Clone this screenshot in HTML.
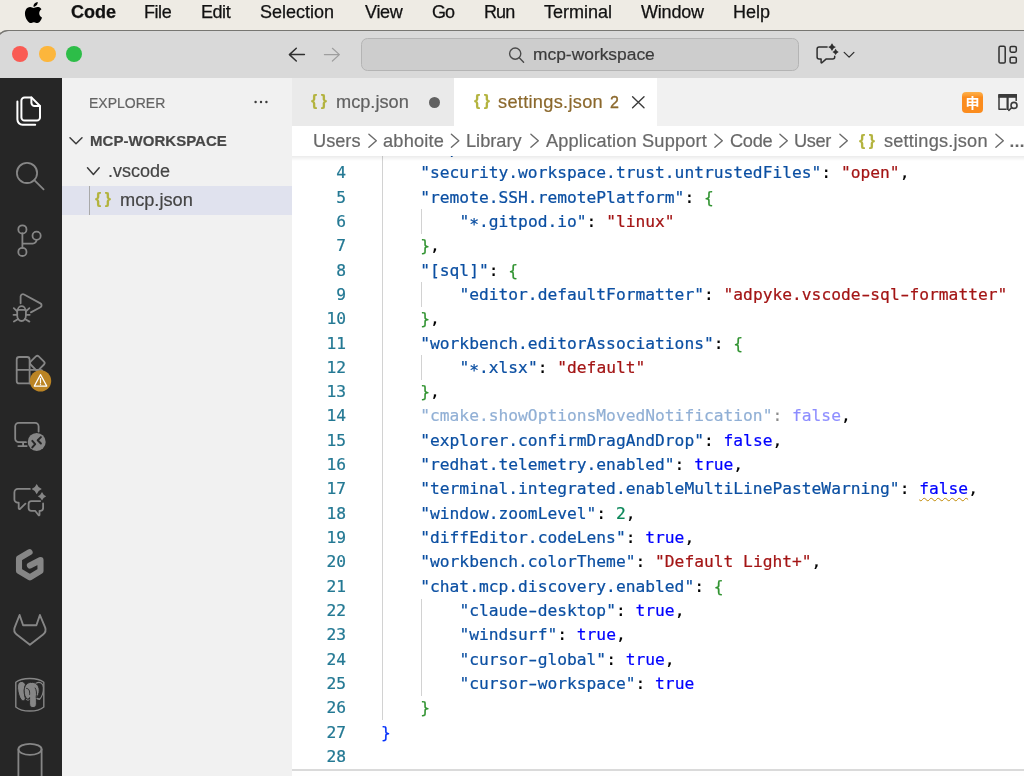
<!DOCTYPE html>
<html lang="en">
<head>
<meta charset="utf-8">
<title>settings.json — mcp-workspace</title>
<style>
*{box-sizing:border-box;margin:0;padding:0}
html,body{width:1024px;height:776px;overflow:hidden;background:#eeebe4}
body{position:relative;font-family:"Liberation Sans","Noto Sans CJK JP",sans-serif;color:#3b3b3b;-webkit-font-smoothing:antialiased}
.abs{position:absolute}
/* ---------- macOS menu bar ---------- */
#menubar{position:absolute;left:0;top:0;width:1024px;height:30px;background:#eeebe4}
#menubar span{position:absolute;top:-.6px;height:30px;line-height:27px;font-size:18px;color:#111;white-space:nowrap;-webkit-text-stroke:.25px}
#menubar span.b{font-weight:bold}
/* ---------- window ---------- */
#win{position:absolute;left:-4.5px;top:30px;width:1040px;height:760px;background:#d9d9d9;border-top-left-radius:12px;overflow:hidden;box-shadow:inset 0 1px 0 #777672, inset 1px 1px 0 #777672}
#titlebar{position:absolute;left:4.5px;top:0;width:1024px;height:48px}
.tl{position:absolute;top:15.9px;width:16.3px;height:16.3px;border-radius:50%}
#search{position:absolute;left:360.6px;top:8.4px;width:438.4px;height:32.6px;border-radius:6.5px;background:#cdcdcd;border:1px solid #b4b4b4}
#search span{position:absolute;left:171px;top:0;line-height:30px;font-size:17.4px;color:#3a3a3a;white-space:nowrap;-webkit-text-stroke:.2px}
/* ---------- activity bar ---------- */
#activity{position:absolute;left:0;top:78px;width:62px;height:698px;background:#262626}
/* ---------- sidebar ---------- */
#sidebar{position:absolute;left:62px;top:78px;width:230px;height:698px;background:#f1f1f1}
#sidebar .t{position:absolute;white-space:nowrap;-webkit-text-stroke:.2px}
/* ---------- editor area ---------- */
#tabs{position:absolute;left:292px;top:78px;width:732px;height:48px;background:#f1f1f1}
.tab{position:absolute;top:0;height:48px}
.tab .lbl{position:absolute;top:0;line-height:48px;font-size:18.2px;white-space:nowrap;-webkit-text-stroke:.2px}
.br{font-family:"Liberation Sans",sans-serif;color:#b3b33e;font-weight:bold;letter-spacing:3.55px}
#crumbs{position:absolute;left:292px;top:126px;width:732px;height:30px;background:#fff}
#crumbs span{position:absolute;top:0;line-height:30px;font-size:18.2px;color:#686868;white-space:nowrap;-webkit-text-stroke:.2px}
#editor{position:absolute;left:292px;top:156px;width:732px;height:613px;background:#fff;overflow:hidden}
#code{position:absolute;left:0;top:-19.2px;width:732px}
.ln{position:relative;height:24.32px;line-height:24.32px;font-family:"DejaVu Sans Mono","Liberation Mono",monospace;font-size:16.25px;white-space:pre;color:#000;-webkit-text-stroke:.22px}
.ln i{position:absolute;left:0;top:0;width:54px;text-align:right;font-style:normal;color:#237893}
.ln b{position:absolute;left:89.1px;top:0;font-weight:normal}
.k{color:#0b4fa2}.s{color:#a31515}.w{color:#0000ff}.n{color:#098658}.g1{color:#0431fa}.g2{color:#319331}
.hy{display:inline-block;transform:scaleX(1.55)}
.as{position:relative;top:3px}
.fade{opacity:.45}
.sq{text-decoration:underline wavy #bf8803;text-decoration-thickness:1.2px;text-underline-offset:3px;text-decoration-skip-ink:none}
.guide{position:absolute;width:1.3px;background:#d2d2d2}
#panel{position:absolute;left:292px;top:769px;width:732px;height:7px;background:#fefefe;border-top:2px solid #dadada}
#menubar span,#search span,#sidebar .t,.tab .lbl,#crumbs span,#code,.emoji{will-change:transform}
</style>
</head>
<body>

<div id="menubar">
  <svg class="abs" style="left:23.3px;top:2.1px" width="21" height="21" viewBox="0 0 24 24"><path fill="#000" d="M12.152 6.896c-.948 0-2.415-1.078-3.96-1.04-2.04.027-3.91 1.183-4.961 3.014-2.117 3.675-.546 9.103 1.519 12.09 1.013 1.454 2.208 3.09 3.792 3.039 1.52-.065 2.09-.987 3.935-.987 1.831 0 2.35.987 3.96.948 1.637-.026 2.676-1.48 3.676-2.948 1.156-1.688 1.636-3.325 1.662-3.415-.039-.013-3.182-1.221-3.22-4.857-.026-3.04 2.48-4.494 2.597-4.559-1.429-2.09-3.623-2.324-4.39-2.376-2-.156-3.675 1.09-4.61 1.09zM15.53 3.83c.843-1.012 1.4-2.427 1.245-3.83-1.207.052-2.662.805-3.532 1.818-.78.896-1.454 2.338-1.273 3.714 1.338.104 2.715-.688 3.559-1.701"/></svg>
  <span class="b" style="left:71px">Code</span>
  <span style="left:144px;letter-spacing:-.45px">File</span>
  <span style="left:201px;letter-spacing:-.45px">Edit</span>
  <span style="left:260px">Selection</span>
  <span style="left:365px;letter-spacing:-.3px">View</span>
  <span style="left:432px;letter-spacing:-1px">Go</span>
  <span style="left:483.5px;letter-spacing:-.9px">Run</span>
  <span style="left:544px">Terminal</span>
  <span style="left:641px;letter-spacing:-.2px">Window</span>
  <span style="left:733px">Help</span>
</div>

<div id="win">
  <div id="titlebar">
    <div class="tl" style="left:12.15px;background:#fa5b54"></div>
    <div class="tl" style="left:39.25px;background:#fcb63c"></div>
    <div class="tl" style="left:66.15px;background:#2dbd48"></div>
    <div id="search"><span>mcp-workspace</span></div>
  </div>
</div>

<svg id="tbicons" class="abs" style="left:0;top:30px" width="1024" height="48" viewBox="0 30 1024 48" fill="none" stroke="#2f2f2f" stroke-width="1.5" stroke-linecap="round" stroke-linejoin="round">
  <path d="M304.4 54.6H289.4M296.3 48.3L289.4 54.6L296.3 61"/>
  <path d="M324.4 54.6H339.4M332.4 48.3L339.4 54.6L332.4 61" stroke="#9e9e9e" stroke-width="1.2"/>
  <!-- search glyph -->
  <circle cx="515.2" cy="53.6" r="5.6" stroke="#4a4a4a" stroke-width="1.4"/>
  <path d="M519.3 57.8L523.6 62.2" stroke="#4a4a4a" stroke-width="1.4"/>
  <!-- chat sparkle -->
  <path d="M827.1 47.1H819.1a2 2 0 0 0-2 2V57.1a2 2 0 0 0 2 2H821.1V62.4a.5.5 0 0 0 .85.35L826 59.1H832.7a2 2 0 0 0 2-2V56.2"/>
  <path d="M832 43.20Q833.09 46.01 835.90 47.1Q833.09 48.19 832 51.00Q830.91 48.19 828.10 47.1Q830.91 46.01 832 43.20Z" fill="#2f2f2f" stroke="none"/>
  <path d="M835.6 48.80Q836.47 51.03 838.70 51.9Q836.47 52.77 835.6 55.00Q834.73 52.77 832.50 51.9Q834.73 51.03 835.6 48.80Z" fill="#2f2f2f" stroke="none"/>
  <path d="M844.2 52.4L849.1 57.1L853.9 52.4" stroke-width="1.3"/>
  <!-- layout -->
  <rect x="999" y="46.3" width="6.2" height="16.8" rx="1.4"/>
  <rect x="1010.1" y="46.4" width="6.2" height="5.8" rx="1.4"/>
  <rect x="1010.1" y="57.2" width="6.2" height="5.9" rx="1.4"/>
</svg>

<div id="activity">
<svg class="abs" style="left:0;top:0" width="62" height="698" viewBox="0 78 62 698" fill="none" stroke="#868686" stroke-width="1.8" stroke-linecap="round" stroke-linejoin="round">
  <!-- explorer (active) -->
  <g stroke="#ffffff" stroke-width="2">
    <path d="M24.6 97.4H31.4L40 106V117.4a3.2 3.2 0 0 1-3.2 3.2H24.6a3.2 3.2 0 0 1-3.2-3.2V100.6a3.2 3.2 0 0 1 3.2-3.2Z"/>
    <path d="M31.4 97.6V102.8a3.2 3.2 0 0 0 3.2 3.2H39.8"/>
    <path d="M17.4 101.6V119.6a5.2 5.2 0 0 0 5.2 5.2H35.2"/>
  </g>
  <!-- search -->
  <circle cx="27" cy="172.9" r="10.1"/>
  <path d="M34.3 180.2L43.6 189.3"/>
  <!-- source control -->
  <circle cx="22.4" cy="229.4" r="4.1"/>
  <circle cx="22.4" cy="251.9" r="4.1"/>
  <circle cx="36.6" cy="235.7" r="4.1"/>
  <path d="M22.4 233.5V247.8M36.6 239.8a3.8 3.8 0 0 1-3.8 3.8H22.4"/>
  <!-- run and debug -->
  <path d="M20.6 303.3V296.6a2.4 2.4 0 0 1 3.5-2.1L40.4 303.4a2.2 2.2 0 0 1 0 3.9L30.9 312.4"/>
  <path d="M17.2 309.9H25.9V315.6a4.35 5.4 0 0 1-8.7 0Z"/>
  <path d="M17.9 309.9a3.7 3.7 0 0 1 7.4 0"/>
  <path d="M17.2 311.4L13.8 308.2M17.2 314.8H13.5M18.2 319L13.9 321.6M25.9 311.4L29.4 308.2M25.9 314.8H29.7M24.9 319L29.4 321.6"/>
  <!-- extensions -->
  <path d="M19.2 357H27.1a2.5 2.5 0 0 1 2.5 2.5V383.4H19.2a2.5 2.5 0 0 1-2.5-2.5V359.5a2.5 2.5 0 0 1 2.5-2.5Z"/>
  <path d="M16.7 369.9H40.5a2 2 0 0 1 2 2V381a2.4 2.4 0 0 1-2.4 2.4H29.6"/>
  <path d="M35.9 356.4a2 2 0 0 1 2.8 0l5.3 5.3a2 2 0 0 1 0 2.8l-5.3 5.3a2 2 0 0 1-2.8 0l-5.3-5.3a2 2 0 0 1 0-2.8Z"/>
  <circle cx="40.5" cy="380.9" r="10.7" fill="#bb8424" stroke="none"/>
  <path d="M40.5 374.6L34.3 386.1H46.8Z" stroke="#ffffff" stroke-width="1.2"/>
  <path d="M40.5 378.4V383" stroke="#ffffff" stroke-width="1.2"/>
  <circle cx="40.5" cy="384.6" r=".7" fill="#ffffff" stroke="none"/>
  <!-- remote explorer -->
  <path d="M38.6 431.6V426.4a3.5 3.5 0 0 0-3.5-3.5H18.7a3.5 3.5 0 0 0-3.5 3.5V438.7a3.5 3.5 0 0 0 3.5 3.5H26M23.1 442.2V446.1M18.3 446.1H26.7"/>
  <circle cx="36.7" cy="441.9" r="9" fill="#868686" stroke="none"/>
  <path d="M32.3 440.9L35.2 444.1L32.3 447.4M40.9 437.1L37.7 440.2L40.9 443.5" stroke="#262626" stroke-width="2"/>
  <!-- chat -->
  <path d="M29.9 488.9H17.9a3.5 3.5 0 0 0-3.5 3.5V499.4a3.3 3.3 0 0 0 3.3 3.3H18.7V508.2a.8.8 0 0 0 1.4.6L25.4 503.7"/>
  <path d="M40.2 501.1H31.4a2.8 2.8 0 0 0-2.8 2.8V508a2.8 2.8 0 0 0 2.8 2.8H35.1L38.6 515.2a.5.5 0 0 0 .9-.3V510.8H40.3a2.8 2.8 0 0 0 2.8-2.8V503.5"/>
  <path d="M36.7 484.00Q38.13 487.67 41.80 489.1Q38.13 490.53 36.7 494.20Q35.27 490.53 31.60 489.1Q35.27 487.67 36.7 484.00Z" fill="#868686" stroke="none"/>
  <path d="M42 492.00Q43.18 495.02 46.20 496.2Q43.18 497.38 42 500.40Q40.82 497.38 37.80 496.2Q40.82 495.02 42 492.00Z" fill="#868686" stroke="none"/>
  <!-- gitpod -->
  <path d="M29.6 552.2L19 558.4V570.9L29.9 577.4L40.5 570.9V560L29.9 565.5" stroke-width="6.1"/>
  <!-- gitlab -->
  <path d="M19.6 615L23.1 625.3H36.4L39.9 615L45.2 627.6C46.2 630.4 45.4 632.6 43.1 634.4L29.9 644.7L16.7 634.4C14.4 632.6 13.6 630.4 14.6 627.6Z" stroke-width="1.9"/>
  <!-- postgres -->
  <path d="M15.8 682.2C22 677.2 37.6 677.2 43.8 682.2V707C37.6 712.4 22 712.4 15.8 707Z" stroke-width="1.4"/>
  <g fill="#868686" stroke="#262626" stroke-width=".9">
    <path d="M21.6 681.4C18.6 681.4 17.2 684.5 17.6 688.5C18 692.8 19.4 697.6 21.4 699.9C22.6 701.2 24.4 700.9 25.2 699.2C25.6 698.4 25 697.4 24.8 696.4C24 692.8 24 688 25.4 684.6C24.6 682.6 23.2 681.4 21.6 681.4Z"/>
    <path d="M31.6 682.2C27.4 682.2 24.4 685.4 24.2 690.2C24.1 694.4 25.2 697.8 27.2 698.9C28.2 699.4 29.2 698.8 29.6 697.6V703.8C29.6 706.4 31.2 707.6 33 707.6C34.8 707.6 36.4 706.4 36.4 703.8V697.4C38.2 696 39.2 693.4 39.2 690.2C39.2 685.4 35.8 682.2 31.6 682.2Z"/>
    <path d="M36 683.2C39.8 681.2 43.2 683 43.4 687.4C43.6 691.8 42 696.6 39.6 699.4L37.2 698.4" fill="none" stroke="#868686" stroke-width="1.2"/>
    <path d="M26.6 688.4C28.8 688.4 30 690.6 29.6 694.4M35.2 688C36.6 690 36.8 693.4 36.2 697" fill="none"/>
    <path d="M26.4 699.6C27.4 700.4 28.4 700.4 29.2 699.8M37 698.8C38 699.4 39.2 699.2 40 698.6" fill="none" stroke="#868686" stroke-width="1"/>
  </g>
  <!-- database -->
  <ellipse cx="30" cy="749.3" rx="11.6" ry="5.5"/>
  <path d="M18.4 749.3V780M41.6 749.3V780"/>
</svg>
</div>

<div id="sidebar">
  <div class="t" style="left:27.3px;top:14.5px;font-size:14px;line-height:20px;color:#646464">EXPLORER</div>
  <div class="t" style="left:28px;top:52.6px;font-size:15px;line-height:20px;font-weight:bold;color:#474747;letter-spacing:.04px">MCP-WORKSPACE</div>
  <div class="t" style="left:46px;top:78px;font-size:18px;line-height:30px;color:#444">.vscode</div>
  <div class="abs" style="left:0;top:107.5px;width:230px;height:29.3px;background:#e0e2ee"></div>
  <div class="abs" style="left:27px;top:107.5px;width:1.3px;height:29.3px;background:#a9a9a9"></div>
  <div class="t br" style="left:33.2px;top:105.6px;font-size:16px;line-height:29px">{}</div>
  <div class="t" style="left:57.5px;top:107.5px;font-size:18.2px;line-height:29.5px;color:#444">mcp.json</div>
  <svg class="abs" style="left:0;top:0" width="230" height="150" viewBox="62 78 230 150" fill="none" stroke="#3b3b3b" stroke-width="1.5" stroke-linecap="round" stroke-linejoin="round">
    <path d="M70 137.8L76 143.8L82 137.8"/>
    <path d="M87.5 167.8L93.4 174.4L99.2 167.8"/>
    <g fill="#3b3b3b" stroke="none"><circle cx="255.6" cy="102" r="1.2"/><circle cx="261" cy="102" r="1.2"/><circle cx="266.4" cy="102" r="1.2"/></g>
  </svg>
</div>

<div id="tabs">
  <div class="tab" style="left:0;width:162px;background:#eaeaea">
    <span class="lbl br" style="left:19px;top:-1px;font-size:16px">{}</span>
    <span class="lbl" style="left:43.5px;color:#616161">mcp.json</span>
    <div class="abs" style="left:136.5px;top:18.5px;width:11px;height:11px;border-radius:50%;background:#616161"></div>
  </div>
  <div class="tab" style="left:162px;width:202.5px;background:#fff">
    <span class="lbl br" style="left:19.9px;top:-1px;font-size:16px">{}</span>
    <span class="lbl" style="left:44px;color:#8b682c;letter-spacing:.3px">settings.json</span>
    <span class="lbl" style="left:156.3px;top:.6px;color:#8b682c;font-size:16px;-webkit-text-stroke:.35px">2</span>
  </div>
  <div class="abs emoji" style="left:669.5px;top:14px;width:21px;height:20.6px;border-radius:4px;background:#fb8c1d;color:#fff;font-size:14px;line-height:22px;text-align:center;font-weight:bold;background:linear-gradient(#fdb04a 0,#fca036 14%,#fb8c1e 26%,#fb8c1e 100%)">申</div>
  <svg class="abs" style="left:0;top:0" width="732" height="48" viewBox="292 78 732 48" fill="none" stroke="#3b3b3b" stroke-width="1.4" stroke-linecap="round" stroke-linejoin="round">
    <path d="M632.6 96.8L644 107.7M644 96.8L632.6 107.7"/>
    <path d="M999 94.8H1016.2V101M999 94.8V109.3H1006.4" stroke-width="1.5" stroke-linecap="butt"/>
    <path d="M998.3 95.9H1016.9" stroke-width="3.8" stroke-linecap="butt"/>
    <path d="M1007.6 95V110" stroke-width="2.2" stroke-linecap="butt"/>
    <circle cx="1014" cy="105.4" r="3" fill="#f1f1f1" stroke-width="1.6"/>
    <path d="M1011.9 107.5L1008.8 110.3" stroke-width="1.6"/>
  </svg>
</div>

<div id="crumbs">
  <span style="left:21.4px">Users</span>
  <span style="left:91.3px;letter-spacing:.2px">abhoite</span>
  <span style="left:174px">Library</span>
  <span style="left:253.5px;letter-spacing:.17px">Application Support</span>
  <span style="left:437.5px;letter-spacing:-.3px">Code</span>
  <span style="left:502.4px;letter-spacing:-.4px">User</span>
  <span class="br" style="left:567.3px;top:-.5px;font-size:16px;color:#b3b33e">{}</span>
  <span style="left:592.3px;letter-spacing:.2px">settings.json</span>
  <span style="left:717.4px;top:1.3px;font-size:16px;font-weight:bold">…</span>
  <svg class="abs" style="left:0;top:0" width="732" height="30" viewBox="292 126 732 30" fill="none" stroke="#6a6a6a" stroke-width="1.4" stroke-linecap="round" stroke-linejoin="round">
    <path d="M368.9 134.3L376.3 140.8L368.9 147.3"/>
    <path d="M451.4 134.3L458.8 140.8L451.4 147.3"/>
    <path d="M530.9 134.3L538.3 140.8L530.9 147.3"/>
    <path d="M714.9 134.3L722.3 140.8L714.9 147.3"/>
    <path d="M779.9 134.3L787.3 140.8L779.9 147.3"/>
    <path d="M839.9 134.3L847.3 140.8L839.9 147.3"/>
    <path d="M995.9 134.3L1003.3 140.8L995.9 147.3"/>
  </svg>
</div>

<div id="editor">
  <div class="guide" style="left:90px;top:0;height:564px"></div>
  <div class="guide" style="left:129px;top:53.4px;height:24.3px"></div>
  <div class="guide" style="left:129px;top:126.4px;height:24.3px"></div>
  <div class="guide" style="left:129px;top:199.3px;height:24.3px"></div>
  <div class="guide" style="left:129px;top:442.5px;height:97.3px"></div>
  <div id="code">
<div class="ln"><i>3</i><b>    <span class="k">"explorer.confirmDelete"</span>: <span class="w">false</span>,</b></div>
<div class="ln"><i>4</i><b>    <span class="k">"security.workspace.trust.untrustedFiles"</span>: <span class="s">"open"</span>,</b></div>
<div class="ln"><i>5</i><b>    <span class="k">"remote.SSH.remotePlatform"</span>: <span class="g2">{</span></b></div>
<div class="ln"><i>6</i><b>        <span class="k">"<span class="as">*</span>.gitpod.io"</span>: <span class="s">"linux"</span></b></div>
<div class="ln"><i>7</i><b>    <span class="g2">}</span>,</b></div>
<div class="ln"><i>8</i><b>    <span class="k">"[sql]"</span>: <span class="g2">{</span></b></div>
<div class="ln"><i>9</i><b>        <span class="k">"editor.defaultFormatter"</span>: <span class="s">"adpyke.vscode<span class="hy">-</span>sql<span class="hy">-</span>formatter"</span></b></div>
<div class="ln"><i>10</i><b>    <span class="g2">}</span>,</b></div>
<div class="ln"><i>11</i><b>    <span class="k">"workbench.editorAssociations"</span>: <span class="g2">{</span></b></div>
<div class="ln"><i>12</i><b>        <span class="k">"<span class="as">*</span>.xlsx"</span>: <span class="s">"default"</span></b></div>
<div class="ln"><i>13</i><b>    <span class="g2">}</span>,</b></div>
<div class="ln"><i>14</i><b><span class="fade">    <span class="k">"cmake.showOptionsMovedNotification"</span>: <span class="w">false</span></span>,</b></div>
<div class="ln"><i>15</i><b>    <span class="k">"explorer.confirmDragAndDrop"</span>: <span class="w">false</span>,</b></div>
<div class="ln"><i>16</i><b>    <span class="k">"redhat.telemetry.enabled"</span>: <span class="w">true</span>,</b></div>
<div class="ln"><i>17</i><b>    <span class="k">"terminal.integrated.enableMultiLinePasteWarning"</span>: <span class="w sq">false</span>,</b></div>
<div class="ln"><i>18</i><b>    <span class="k">"window.zoomLevel"</span>: <span class="n">2</span>,</b></div>
<div class="ln"><i>19</i><b>    <span class="k">"diffEditor.codeLens"</span>: <span class="w">true</span>,</b></div>
<div class="ln"><i>20</i><b>    <span class="k">"workbench.colorTheme"</span>: <span class="s">"Default Light+"</span>,</b></div>
<div class="ln"><i>21</i><b>    <span class="k">"chat.mcp.discovery.enabled"</span>: <span class="g2">{</span></b></div>
<div class="ln"><i>22</i><b>        <span class="k">"claude<span class="hy">-</span>desktop"</span>: <span class="w">true</span>,</b></div>
<div class="ln"><i>23</i><b>        <span class="k">"windsurf"</span>: <span class="w">true</span>,</b></div>
<div class="ln"><i>24</i><b>        <span class="k">"cursor<span class="hy">-</span>global"</span>: <span class="w">true</span>,</b></div>
<div class="ln"><i>25</i><b>        <span class="k">"cursor<span class="hy">-</span>workspace"</span>: <span class="w">true</span></b></div>
<div class="ln"><i>26</i><b>    <span class="g2">}</span></b></div>
<div class="ln"><i>27</i><b><span class="g1">}</span></b></div>
<div class="ln"><i>28</i><b></b></div>
  </div>
  <div class="abs" style="left:0;top:0;width:732px;height:5px;background:linear-gradient(rgba(0,0,0,.08),rgba(0,0,0,0))"></div>
</div>

<div id="panel"></div>

</body>
</html>
